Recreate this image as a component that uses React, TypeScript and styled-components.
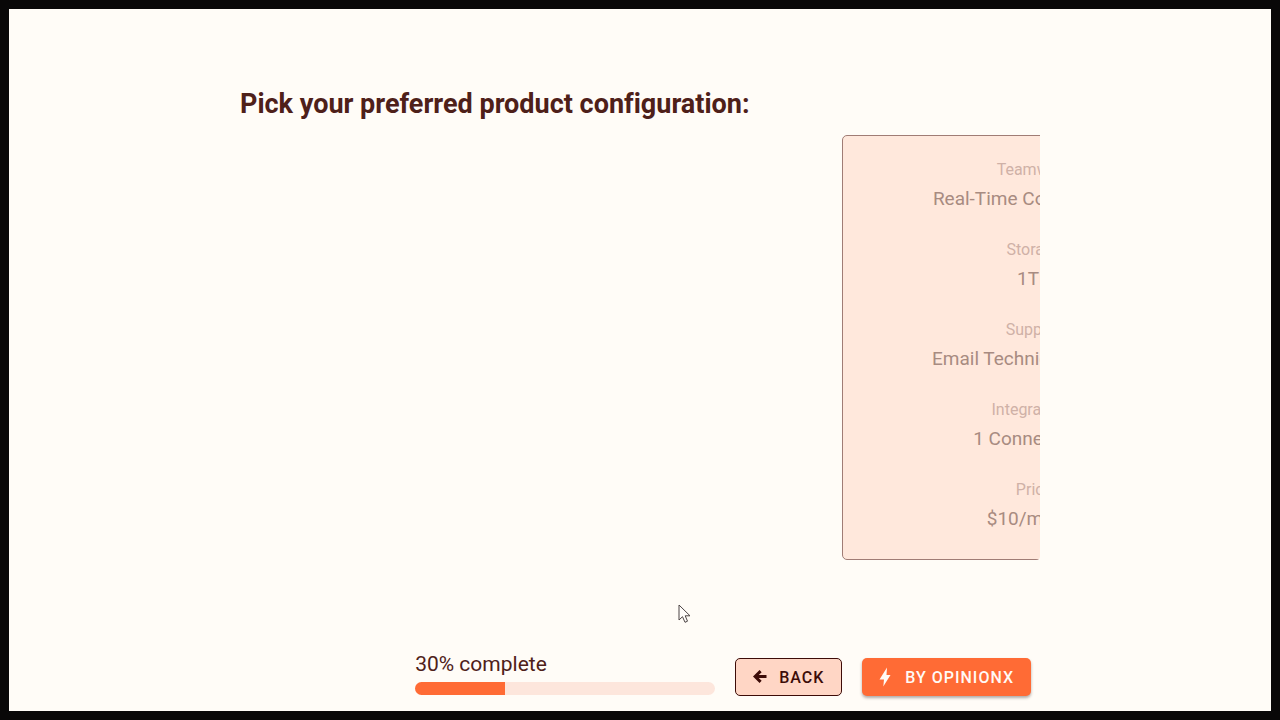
import React from "react";
import styled, { createGlobalStyle } from "styled-components";

const GlobalStyle = createGlobalStyle`
  *, *::before, *::after { box-sizing: border-box; }
  body {
    margin: 0;
    background: #fffcf7;
    color: #4e2019;
    font-family: Roboto, "Liberation Sans", sans-serif;
    font-variant-ligatures: none;
  }
`;

const Frame = styled.div`
  min-height: 100vh;
  display: flex;
  flex-direction: column;
  align-items: center;
  padding: 78px 0 15px;
  border: 9px solid #090808;
  overflow: hidden;
`;

const Survey = styled.main`
  width: 100%;
  max-width: 800px;
  flex: 1;
  display: flex;
  flex-direction: column;
`;

const Title = styled.h1`
  margin: 0 0 14px;
  font-size: 27px;
  line-height: 34px;
  font-weight: 700;
`;

const Stage = styled.section`
  display: flex;
  overflow: hidden;
  border-radius: 0 0 4px 0;
`;

const OptionCard = styled.article`
  flex: none;
  width: 48%;
  margin-left: 602px;
  padding: 20px 16px 25px;
  border: 1px solid #a07c75;
  border-radius: 5px;
  background: #ffe8dc;
  text-align: center;
`;

const Features = styled.dl`
  margin: 0;
  display: flex;
  flex-direction: column;
  gap: 22px;
`;

const Feature = styled.div`
  display: flex;
  flex-direction: column;
`;

const FeatureName = styled.dt`
  font-size: 16px;
  line-height: 28px;
  color: #cfb1a7;
`;

const FeatureValue = styled.dd`
  margin: 0;
  font-size: 19px;
  line-height: 30px;
  color: #a88b81;
`;

const Footer = styled.footer`
  margin-top: auto;
  padding-right: 9px;
  display: flex;
  justify-content: flex-end;
  align-items: flex-end;
  gap: 20px;
`;

const Progress = styled.div`
  width: 300px;
  padding-bottom: 1px;
  display: flex;
  flex-direction: column;
  gap: 4px;
`;

const ProgressLabel = styled.span`
  font-size: 21px;
  line-height: 28px;
`;

const Track = styled.div`
  height: 13px;
  border-radius: 7px;
  overflow: hidden;
  background: #fde6dc;
`;

const Fill = styled.div`
  height: 100%;
  background: #ff6b35;
`;

const Button = styled.button<{ $primary?: boolean }>`
  height: 38px;
  padding: 0 17px;
  display: flex;
  align-items: center;
  gap: 12px;
  border: ${(p) => (p.$primary ? "0" : "1px solid #3d0c08")};
  border-radius: 5px;
  background: ${(p) => (p.$primary ? "#ff6b35" : "#ffd6c5")};
  color: ${(p) => (p.$primary ? "#fffaf5" : "#3d0c08")};
  box-shadow: ${(p) => (p.$primary ? "0 2px 3px rgba(60, 50, 50, 0.4)" : "none")};
  font-family: inherit;
  font-size: 16px;
  font-weight: 500;
  letter-spacing: 1px;
  text-transform: uppercase;
  white-space: nowrap;
  cursor: pointer;
`;

const Pointer = styled.svg`
  position: absolute;
  left: 678px;
  top: 604px;
  pointer-events: none;
`;

const features = [
  { name: "Teamwork", value: "Real-Time Collaboration" },
  { name: "Storage", value: "1TB" },
  { name: "Support", value: "Email Technical Support" },
  { name: "Integrations", value: "1 Connections" },
  { name: "Price", value: "$10/month" },
];

const ArrowLeft = () => (
  <svg width="14" height="14" viewBox="0 0 14 14" fill="none" stroke="currentColor" strokeWidth="3" aria-hidden="true">
    <path d="M7.6 1.2 2.1 6.5 7.6 11.8M2.5 6.5H13.5" />
  </svg>
);

const Bolt = () => (
  <svg width="14" height="20" viewBox="0 0 14 20" fill="currentColor" aria-hidden="true">
    <path d="M8 .5 .5 12.5H5L4.3 19.5 11.5 8H7.5Z" />
  </svg>
);

export default function App() {
  const percent = 30;
  return (
    <>
      <GlobalStyle />
      <Frame>
        <Survey>
          <Title>Pick your preferred product configuration:</Title>
          <Stage>
            <OptionCard>
              <Features>
                {features.map((f) => (
                  <Feature key={f.name}>
                    <FeatureName>{f.name}</FeatureName>
                    <FeatureValue>{f.value}</FeatureValue>
                  </Feature>
                ))}
              </Features>
            </OptionCard>
          </Stage>
          <Footer>
            <Progress>
              <ProgressLabel id="progress-label">{percent}% complete</ProgressLabel>
              <Track role="progressbar" aria-labelledby="progress-label" aria-valuenow={percent} aria-valuemin={0} aria-valuemax={100}>
                <Fill style={{ width: `${percent}%` }} />
              </Track>
            </Progress>
            <Button type="button">
              <ArrowLeft />
              Back
            </Button>
            <Button type="button" $primary>
              <Bolt />
              By OpinionX
            </Button>
          </Footer>
        </Survey>
      </Frame>
      <Pointer width="14" height="20" viewBox="0 0 14 20" fill="#fffdfb" stroke="#4d4545" aria-hidden="true">
        <path d="M1 1V16L4.5 12.7 7 18.3 9.5 17.2 7.2 11.8H12Z" />
      </Pointer>
    </>
  );
}
